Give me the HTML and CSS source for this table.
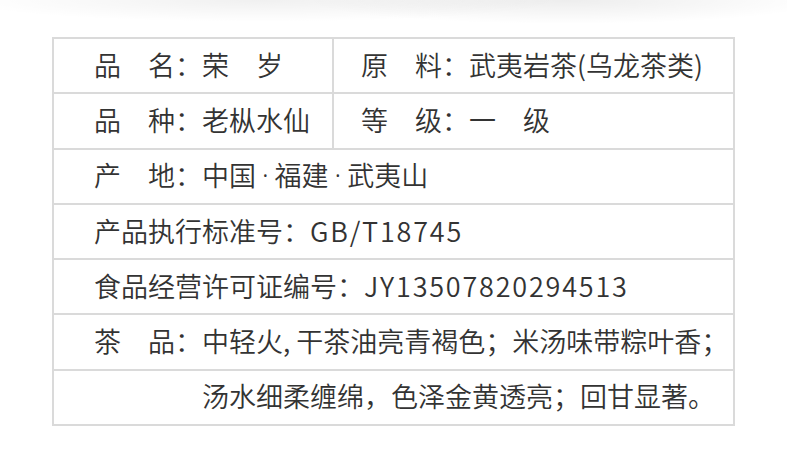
FILE: index.html
```html
<!DOCTYPE html>
<html lang="zh-CN">
<head>
<meta charset="utf-8">
<title>产品信息</title>
<link rel="stylesheet" href="styles.css">
</head>
<body>
<div class="page">
  <div class="shade"></div>
  <div class="spec">
    <div class="row split">
      <div class="cell left">品　名：荣　岁</div>
      <div class="cell right">原　料：武夷岩茶(乌龙茶类)</div>
    </div>
    <div class="row split">
      <div class="cell left">品　种：老枞水仙</div>
      <div class="cell right">等　级：一　级</div>
    </div>
    <div class="row">
      <div class="cell left">产　地：中国<span class="dot">·</span>福建<span class="dot">·</span>武夷山</div>
    </div>
    <div class="row">
      <div class="cell left">产品执行标准号：<span class="latin">GB/T18745</span></div>
    </div>
    <div class="row">
      <div class="cell left">食品经营许可证编号：<span class="latin">JY13507820294513</span></div>
    </div>
    <div class="row">
      <div class="cell left">茶　品：中轻火<span class="comma">,</span>干茶油亮青褐色；米汤味带粽叶香；</div>
    </div>
    <div class="row">
      <div class="cell left indent">汤水细柔缠绵，色泽金黄透亮；回甘显著。</div>
    </div>
  </div>
</div>
</body>
</html>
```

FILE: styles.css
```css
html, body {
  margin: 0;
  padding: 0;
  background: #ffffff;
}

.page {
  width: 787px;
  height: 465px;
  overflow: hidden;
  font-family: "Noto Sans CJK SC", "Noto Sans", sans-serif;
  color: #333333;
}

.shade {
  height: 37px;
  background:
    radial-gradient(ellipse 300px 22px at 33% 0, rgba(0,0,0,0.06), rgba(0,0,0,0) 100%),
    radial-gradient(ellipse 260px 24px at 72% 0, rgba(0,0,0,0.07), rgba(0,0,0,0) 100%);
}

.spec {
  margin-left: 52px;
  width: 683px;
  box-sizing: border-box;
  padding: 2px;
  background: #dadada;
  display: grid;
  grid-template-rows: repeat(7, 53.3px);
  row-gap: 2px;
}

.row {
  display: grid;
  grid-template-columns: 1fr;
}

.row.split {
  grid-template-columns: 278px 1fr;
  column-gap: 2px;
}

.cell {
  background: #ffffff;
  display: flex;
  align-items: center;
  font-size: 27px;
  font-weight: 350;
  line-height: 1;
  white-space: nowrap;
  padding-bottom: 3px;
  box-sizing: border-box;
}

.cell.left {
  padding-left: 40px;
}

.cell.right {
  padding-left: 27px;
}

.cell.indent {
  padding-left: 148px;
}

.latin {
  letter-spacing: 1.8px;
}

.dot {
  font-family: "Noto Sans", sans-serif;
  padding: 0 6px;
}

.comma {
  margin-right: 6px;
}
```
